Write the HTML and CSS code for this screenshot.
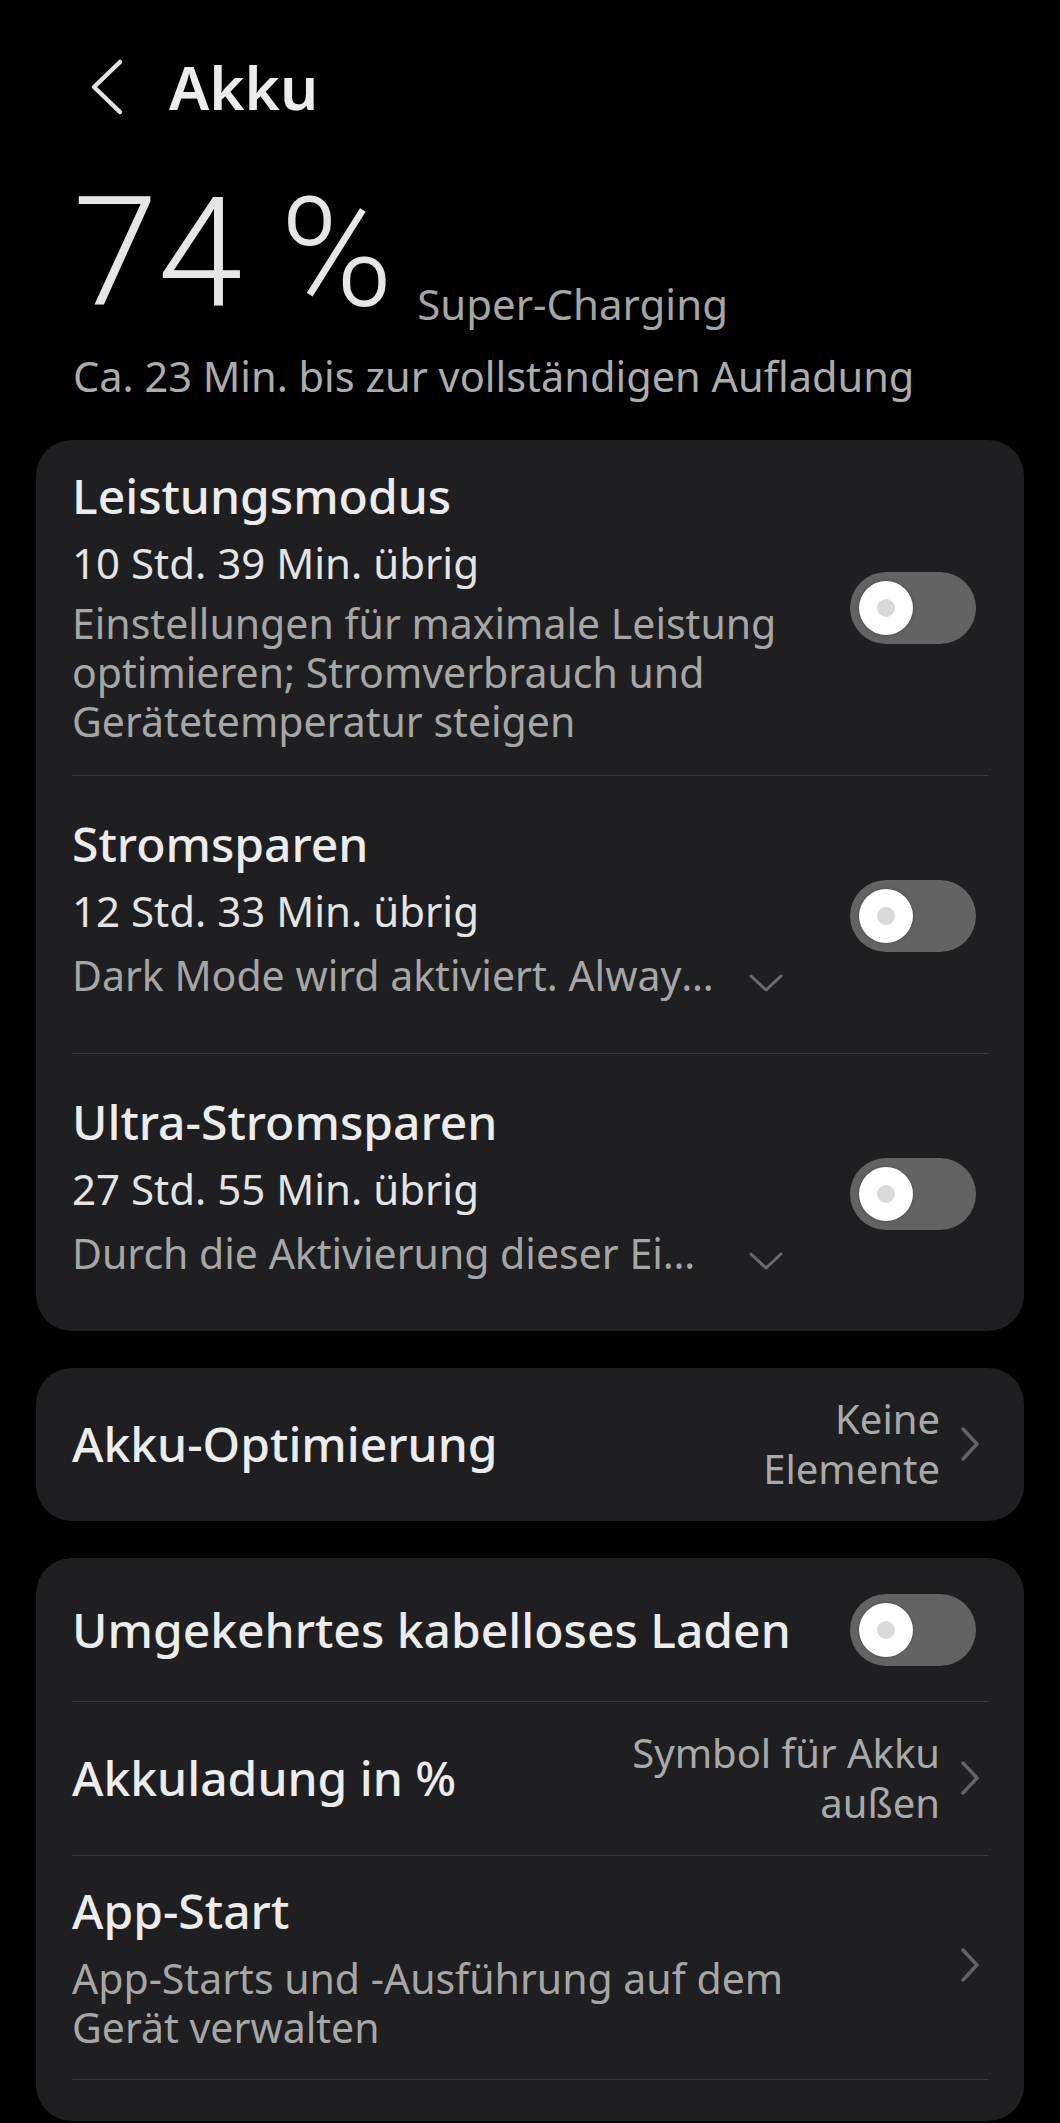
FILE: index.html
```html
<!DOCTYPE html>
<html lang="de">
<head>
  <meta charset="UTF-8" />
  <title>Akku</title>
  <link rel="stylesheet" href="styles.css">
</head>
<body>

  <header class="topbar">
    <svg class="back" width="34" height="60" viewBox="0 0 34 60">
      <path d="M30 5 L4 30 L30 55" fill="none" stroke="#e2e2e2" stroke-width="4.5" stroke-linecap="round" stroke-linejoin="round"/>
    </svg>
    <h1>Akku</h1>
  </header>

  <section class="status">
    <div class="level">
      <span class="pct">74 %</span>
      <span class="mode">Super-Charging</span>
    </div>
    <p class="eta">Ca. 23 Min. bis zur vollständigen Aufladung</p>
  </section>

  <div class="card">
    <div class="row first">
      <div class="text">
        <div class="title">Leistungsmodus</div>
        <div class="time">10 Std. 39 Min. übrig</div>
        <div class="desc">Einstellungen für maximale Leistung optimieren; Stromverbrauch und Gerätetemperatur steigen</div>
      </div>
      <span class="switch"><span class="knob"></span></span>
    </div>

    <div class="row folded">
      <div class="text">
        <div class="title">Stromsparen</div>
        <div class="time">12 Std. 33 Min. übrig</div>
        <div class="desc-line">
          <span class="clip">Dark Mode wird aktiviert. Always On Display wird deaktiviert.</span>
          <svg class="expand" width="36" height="20" viewBox="0 0 36 20">
            <path d="M3 3 L18 17 L33 3" fill="none" stroke="#6b6b6b" stroke-width="3" stroke-linecap="round" stroke-linejoin="round"/>
          </svg>
        </div>
      </div>
      <span class="switch"><span class="knob"></span></span>
    </div>

    <div class="row folded">
      <div class="text">
        <div class="title">Ultra-Stromsparen</div>
        <div class="time">27 Std. 55 Min. übrig</div>
        <div class="desc-line">
          <span class="clip">Durch die Aktivierung dieser Einstellung werden Apps eingeschränkt.</span>
          <svg class="expand" width="36" height="20" viewBox="0 0 36 20">
            <path d="M3 3 L18 17 L33 3" fill="none" stroke="#6b6b6b" stroke-width="3" stroke-linecap="round" stroke-linejoin="round"/>
          </svg>
        </div>
      </div>
      <span class="switch"><span class="knob"></span></span>
    </div>
  </div>

  <div class="card">
    <div class="row link">
      <div class="text"><div class="title">Akku-Optimierung</div></div>
      <div class="value">Keine<br>Elemente</div>
      <svg class="go" width="20" height="36" viewBox="0 0 20 36">
        <path d="M3 3 L17 18 L3 33" fill="none" stroke="#636363" stroke-width="3.5" stroke-linecap="round" stroke-linejoin="round"/>
      </svg>
    </div>
  </div>

  <div class="card">
    <div class="row plain">
      <div class="text"><div class="title">Umgekehrtes kabelloses Laden</div></div>
      <span class="switch flat"><span class="knob"></span></span>
    </div>

    <div class="row link">
      <div class="text"><div class="title">Akkuladung in %</div></div>
      <div class="value">Symbol für Akku<br>außen</div>
      <svg class="go" width="20" height="36" viewBox="0 0 20 36">
        <path d="M3 3 L17 18 L3 33" fill="none" stroke="#636363" stroke-width="3.5" stroke-linecap="round" stroke-linejoin="round"/>
      </svg>
    </div>

    <div class="row link app">
      <div class="text">
        <div class="title">App-Start</div>
        <div class="desc">App-Starts und -Ausführung auf dem Gerät verwalten</div>
      </div>
      <svg class="go" width="20" height="36" viewBox="0 0 20 36">
        <path d="M3 3 L17 18 L3 33" fill="none" stroke="#636363" stroke-width="3.5" stroke-linecap="round" stroke-linejoin="round"/>
      </svg>
    </div>

    <div class="row tail"></div>
  </div>

</body>
</html>
```

FILE: styles.css
```css
html, body {
  margin: 0;
  padding: 0;
}

body {
  background-color: #000;
  color: #ebebeb;
  font-family: "Noto Sans", Roboto, sans-serif;
  height: 2123px;
  overflow: hidden;
}

/* header */

.topbar {
  display: flex;
  align-items: center;
  padding: 54px 0 0 90px;
}

.topbar h1 {
  margin: 0 0 0 45px;
  font-size: 60px;
  font-weight: 600;
  line-height: 66px;
  color: #ececec;
}

.status {
  padding-left: 73px;
}

.level {
  display: flex;
  align-items: flex-end;
  margin-top: 57px;
}

.pct {
  font-family: Roboto, "Noto Sans", sans-serif;
  font-size: 153px;
  font-weight: 300;
  line-height: 152px;
  color: #e6e6e6;
}

.mode {
  margin: 0 0 5px 24px;
  font-size: 42px;
  line-height: 40px;
  color: #a5a5a5;
}

.eta {
  margin: 21px 0 0;
  font-size: 41.5px;
  line-height: 52px;
  color: #acacac;
}

/* cards */

.card {
  margin: 38px 36px 0;
  padding: 0 36px;
  background-color: #1f1f21;
  border-radius: 36px;
}

.card + .card {
  margin-top: 37px;
}

.row {
  display: flex;
  align-items: center;
}

.row + .row {
  border-top: 1px solid #3a3a3c;
}

.row.first { padding: 23px 0 29px; }
.row.folded { padding: 35px 0 46px; }
.row.link { padding: 26px 0 27px; }
.row.plain { padding: 36px 0 35px; }
.row.app { padding: 22px 0 27px; }
.row.tail { height: 41px; }

.text {
  flex: 1;
  min-width: 0;
}

.title {
  font-size: 48px;
  font-weight: 500;
  line-height: 66px;
  color: #ececec;
  white-space: nowrap;
}

.time {
  margin-top: 2px;
  font-size: 42px;
  line-height: 64px;
  color: #e4e4e4;
}

.desc {
  margin-top: 4px;
  font-size: 41px;
  line-height: 49px;
  color: #a6a6a6;
}

.app .text {
  padding-right: 120px;
}

.app .desc {
  margin-top: 10px;
}

.desc-line {
  display: flex;
  align-items: center;
  font-size: 41px;
  line-height: 64px;
  color: #a6a6a6;
}

.clip {
  flex: 0 0 648px;
  white-space: nowrap;
  overflow: hidden;
  text-overflow: ellipsis;
}

.expand {
  flex: none;
  margin: 16px 0 0 28px;
}

/* switch */

.switch {
  flex: none;
  display: flex;
  align-items: center;
  box-sizing: border-box;
  width: 126px;
  height: 72px;
  padding-left: 9px;
  margin: 14px 12px 0 40px;
  border-radius: 36px;
  background-color: #636363;
}

.first .switch {
  margin-top: 6px;
}

.switch.flat {
  margin-top: 0;
}

.knob {
  display: flex;
  align-items: center;
  justify-content: center;
  width: 54px;
  height: 54px;
  border-radius: 50%;
  background-color: #fff;
  box-shadow: 0 0 3px rgba(0, 0, 0, 0.35);
}

.knob::after {
  content: "";
  width: 18px;
  height: 18px;
  border-radius: 50%;
  background-color: #d9d9d9;
}

/* value + arrow */

.value {
  flex: none;
  margin-left: 24px;
  font-size: 40px;
  line-height: 50px;
  text-align: right;
  color: #a9a9a9;
}

.go {
  flex: none;
  margin: 0 8px 0 20px;
}
```
